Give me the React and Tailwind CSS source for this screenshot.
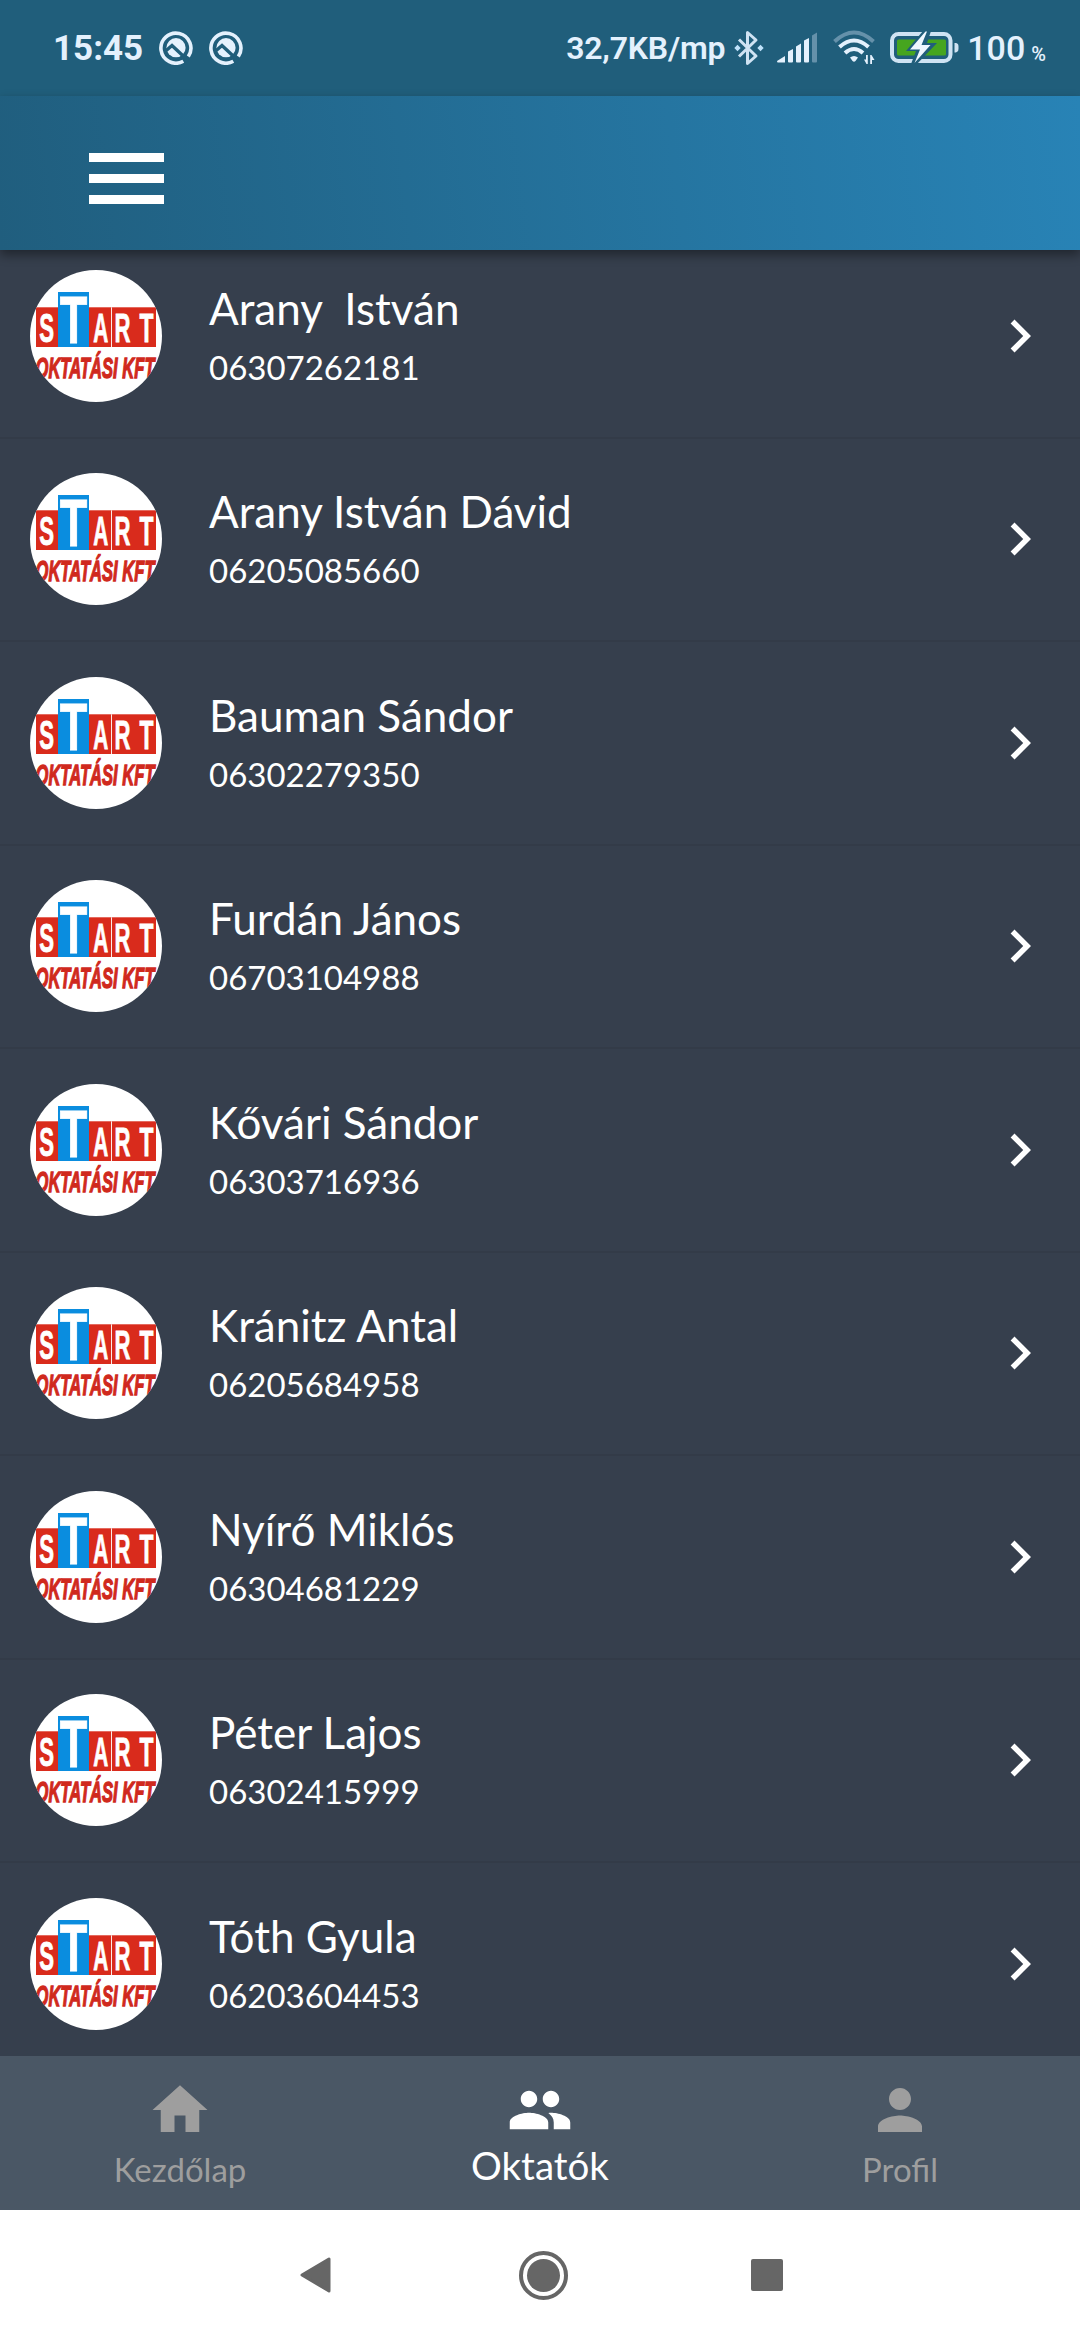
import { MdChevronRight, MdHome, MdPeople, MdPerson } from 'react-icons/md'

const INSTRUCTORS = [
  { name: 'Arany  István', phone: '06307262181' },
  { name: 'Arany István Dávid', phone: '06205085660' },
  { name: 'Bauman Sándor', phone: '06302279350' },
  { name: 'Furdán János', phone: '06703104988' },
  { name: 'Kővári Sándor', phone: '06303716936' },
  { name: 'Kránitz Antal', phone: '06205684958' },
  { name: 'Nyírő Miklós', phone: '06304681229' },
  { name: 'Péter Lajos', phone: '06302415999' },
  { name: 'Tóth Gyula', phone: '06203604453' },
]

const TABS = [
  { label: 'Kezdőlap', icon: MdHome },
  { label: 'Oktatók', icon: MdPeople, active: true },
  { label: 'Profil', icon: MdPerson },
]

export default function App() {
  return (
    <div className="flex h-[2340px] w-[1080px] flex-col overflow-hidden bg-[#363f4d] font-[Lato,sans-serif]">
      <StatusBar />
      <header className="z-10 flex h-[154px] shrink-0 items-center bg-linear-[83deg,#205e7e,#2883b6] pt-[11px] pl-[89px] shadow-[0_5px_10px_rgba(0,0,0,0.4)]">
        <button className="flex w-[75px] flex-col gap-3" aria-label="Menü">
          <span className="h-[9px] bg-white" />
          <span className="h-[9px] bg-white" />
          <span className="h-[9px] bg-white" />
        </button>
      </header>
      <main className="min-h-0 flex-1 overflow-hidden">
        <ul className="-mt-[15px]">
          {INSTRUCTORS.map((item) => (
            <InstructorRow key={item.phone} {...item} />
          ))}
        </ul>
      </main>
      <nav className="grid h-[154px] shrink-0 grid-cols-3 bg-[#4a5765]">
        {TABS.map(({ label, icon: Icon, active }) => (
          <div key={label} className={`flex flex-col items-center pt-[21px] ${active ? 'text-white' : 'text-[#9e9e9e]'}`}>
            <Icon className="h-[66px] w-[66px]" />
            <span className={active ? 'text-[38.5px] leading-[45px]' : 'mt-1 text-[33px] leading-[44px]'}>{label}</span>
          </div>
        ))}
      </nav>
      <SystemNav />
    </div>
  )
}

function InstructorRow({ name, phone }) {
  return (
    <li className="flex h-[203.5px] items-center border-b-2 border-[#333b48] pr-[27px] pl-[30px]">
      <StartLogo />
      <div className="ml-[47px] flex-1 text-white">
        <h2 className="-mt-[3px] text-[44px] leading-[56px] whitespace-pre">{name}</h2>
        <p className="mt-[9px] text-[33px] leading-[44px]">{phone}</p>
      </div>
      <MdChevronRight className="h-[66px] w-[66px] text-white" />
    </li>
  )
}

function StartLogo() {
  return (
    <svg viewBox="0 0 132 132" className="h-[132px] w-[132px] shrink-0 rounded-full bg-white font-['Liberation_Sans',sans-serif] font-bold">
      <rect x="6" y="37.3" width="120" height="39.7" fill="#d92b1c" />
      <rect x="81" y="37.3" width="0.9" height="39.7" fill="#fff" />
      <rect x="28" y="22" width="31" height="55" fill="#0a8ddf" />
      <g fill="#fff" stroke="#fff" strokeWidth="0.8">
        <text x="9.3" y="72" fontSize="41" textLength="14.8" lengthAdjust="spacingAndGlyphs">S</text>
        <text x="29.7" y="72.5" fontSize="67" textLength="27.6" lengthAdjust="spacingAndGlyphs">T</text>
        <text x="63.2" y="72.2" fontSize="41" textLength="15" lengthAdjust="spacingAndGlyphs">A</text>
        <text x="84.4" y="72.2" fontSize="41" textLength="16" lengthAdjust="spacingAndGlyphs">R</text>
        <text x="109.4" y="72.2" fontSize="41" textLength="14" lengthAdjust="spacingAndGlyphs">T</text>
      </g>
      <text x="5.5" y="108" fontSize="29.5" fontStyle="italic" fill="#d0291d" stroke="#d0291d" strokeWidth="1.3" textLength="119" lengthAdjust="spacingAndGlyphs">OKTATÁSI KFT</text>
    </svg>
  )
}

function StatusBar() {
  return (
    <div className="flex h-24 shrink-0 items-center bg-[#205e7b] pr-[34px] pl-[53px] font-[Roboto,sans-serif] text-[#e4f1fd]">
      <span className="w-[90px] text-[35px] leading-none font-bold">15:45</span>
      <NoticeIcon className="ml-[16px] h-[34px] w-[34px]" />
      <NoticeIcon className="ml-[16px] h-[34px] w-[34px]" />
      <span className="ml-auto text-[32px] leading-none font-semibold tracking-[-0.2px]">32,7KB/mp</span>
      <BluetoothIcon />
      <SignalIcon />
      <WifiIcon />
      <BatteryIcon />
      <span className="ml-[8px] text-[34px] leading-none font-medium">100</span>
      <span className="mt-[12px] ml-[6px] text-[20px] leading-none font-medium">%</span>
    </div>
  )
}

function NoticeIcon({ className }) {
  return (
    <svg viewBox="0 0 34 34" className={className} fill="none">
      <path d="M24.3 30.2A15 15 0 1 1 29.3 25.6" stroke="currentColor" strokeWidth="3.6" />
      <circle cx="17" cy="16.7" r="9.6" fill="currentColor" />
      <path d="M6 20.5L13 14.5L29 29.5" stroke="#205e7b" strokeWidth="3.4" />
    </svg>
  )
}

function BluetoothIcon() {
  return (
    <svg viewBox="0 0 30 36" className="ml-[9px] h-[36px] w-[30px]" fill="none">
      <path d="M5 9.5L22 26L13.5 33.5V2.5L22 10L5 26.5" stroke="#cfe3f3" strokeWidth="3" strokeLinejoin="round" />
      <path d="M3.5 14.8L6.7 18L3.5 21.2L0.3 18ZM26.5 14.8L29.7 18L26.5 21.2L23.3 18Z" fill="#bfe2fa" />
    </svg>
  )
}

function SignalIcon() {
  return (
    <svg viewBox="0 0 41 32" className="ml-[13px] h-[32px] w-[41px]" fill="currentColor">
      <path d="M0 29L8 24V30.5H1Q0 30.5 0 29ZM11 19.5L16 17V29.5Q16 30.5 15 30.5H12Q11 30.5 11 29.5ZM19 14.5L24 11.5V29.5Q24 30.5 23 30.5H20Q19 30.5 19 29.5ZM27 8.5L32 6V29.5Q32 30.5 31 30.5H28Q27 30.5 27 29.5Z" />
      <path d="M35 3.5L40 0.5V29.5Q40 30.5 39 30.5H36Q35 30.5 35 29.5Z" fill="#6591aa" />
    </svg>
  )
}

function WifiIcon() {
  return (
    <svg viewBox="0 0 42 36" className="ml-[15px] h-[36px] w-[42px]" fill="none">
      <path d="M1.5 11.5Q21 -6.5 40.5 11.5" stroke="#6591aa" strokeWidth="4" />
      <path d="M6.5 17Q21 4 35.5 17" stroke="currentColor" strokeWidth="4" />
      <path d="M12 23Q21 15 30 23" stroke="currentColor" strokeWidth="4" />
      <path d="M17 27.5Q21 24.5 25 27.5L22.5 31Q21 32.5 19.5 31Z" fill="currentColor" />
      <path d="M34.8 25V34H33.5L31 29.5H33V25ZM37.2 34V25H38.5L41.5 30H39V34Z" fill="currentColor" />
    </svg>
  )
}

function BatteryIcon() {
  return (
    <svg viewBox="0 0 69 36" className="ml-[15px] h-[36px] w-[69px]">
      <rect x="2" y="4" width="58.5" height="27" rx="6.5" fill="none" stroke="#cfe3f3" strokeWidth="4" />
      <rect x="7" y="9.5" width="49" height="16" rx="1.5" fill="#46a51f" />
      <path d="M33 1L16 21H26L21 34H27L47 13H37L41 1Z" fill="#205e7b" />
      <path d="M35.5 1.5L20 19.5H30L24.5 33L40.5 15H31.5L37 1.5Z" fill="#eef7ff" />
      <path d="M64.5 13C68.5 13 68.5 15 68.5 17.5S68.5 22.5 64.5 22.5Z" fill="#cfe3f3" />
    </svg>
  )
}

function SystemNav() {
  return (
    <div className="flex h-[130px] shrink-0 items-center bg-white pl-[299px]">
      <svg viewBox="0 0 33 38" className="h-[38px] w-[33px]">
        <path d="M3 19L30 3V35Z" fill="#666" stroke="#666" strokeWidth="3" strokeLinejoin="round" />
      </svg>
      <span className="ml-[187px] flex h-[49px] w-[49px] items-center justify-center rounded-full border-4 border-[#666]">
        <span className="h-[33px] w-[33px] rounded-full bg-[#666]" />
      </span>
      <span className="ml-[183px] h-8 w-8 rounded-xs bg-[#666]" />
    </div>
  )
}
